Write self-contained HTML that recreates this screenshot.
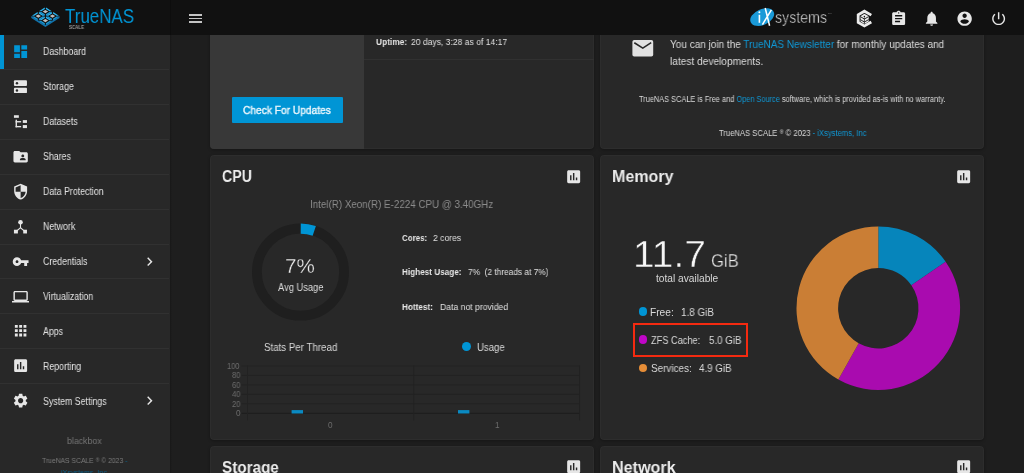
<!DOCTYPE html>
<html><head><meta charset="utf-8"><style>
html,body{margin:0;padding:0;}
body{width:1024px;height:473px;overflow:hidden;position:relative;background:#1e1e1e;font-family:"Liberation Sans",sans-serif;}
.a{position:absolute;}
.t{position:absolute;white-space:pre;line-height:1;transform-origin:0 0;will-change:transform;font-family:"Liberation Sans",sans-serif;}
</style></head><body>
<div style="position:absolute;background:#282828;border-radius:4px;box-shadow:inset 0 0 0 1px rgba(255,255,255,.025),0 1px 3px rgba(0,0,0,.3);left:210px;top:-20px;width:384px;height:169px;overflow:hidden;"><div class="a" style="left:0;top:0;width:154px;height:169px;background:#383838;"></div><div class="a" style="left:154px;top:79.0px;width:230px;height:1px;background:#313131;"></div></div>
<div class="a" style="left:232px;top:97.3px;width:111px;height:25.8px;background:#0095d5;border-radius:1px;"></div>
<div style="position:absolute;background:#282828;border-radius:4px;box-shadow:inset 0 0 0 1px rgba(255,255,255,.025),0 1px 3px rgba(0,0,0,.3);left:600px;top:-20px;width:384px;height:169px;"></div>
<svg class="a" style="left:630px;top:37px" width="26" height="22" viewBox="630 37 26 22"><rect x="632.4" y="40.0" width="20.8" height="16.6" rx="1.8" fill="#e1e1e1"/><path d="M634.3,42.7 L642.8,48.1 L651.2,42.7" stroke="#282828" stroke-width="1.6" fill="none"/></svg>
<div style="position:absolute;background:#282828;border-radius:4px;box-shadow:inset 0 0 0 1px rgba(255,255,255,.025),0 1px 3px rgba(0,0,0,.3);left:210px;top:155px;width:384px;height:285px;"></div>
<div style="position:absolute;background:#282828;border-radius:4px;box-shadow:inset 0 0 0 1px rgba(255,255,255,.025),0 1px 3px rgba(0,0,0,.3);left:600px;top:155px;width:384px;height:285px;"></div>
<div style="position:absolute;background:#282828;border-radius:4px;box-shadow:inset 0 0 0 1px rgba(255,255,255,.025),0 1px 3px rgba(0,0,0,.3);left:210px;top:446px;width:384px;height:60px;"></div>
<div style="position:absolute;background:#282828;border-radius:4px;box-shadow:inset 0 0 0 1px rgba(255,255,255,.025),0 1px 3px rgba(0,0,0,.3);left:600px;top:446px;width:384px;height:60px;"></div>
<svg class="a" style="left:564.83px;top:167.63px" width="17.33" height="17.33" viewBox="0 0 24 24"><path fill="#e6e6e6" d="M19 3H5c-1.1 0-2 .9-2 2v14c0 1.1.9 2 2 2h14c1.1 0 2-.9 2-2V5c0-1.1-.9-2-2-2zM9 17H7v-7h2v7zm4 0h-2V7h2v10zm4 0h-2v-4h2v4z"/></svg>
<svg class="a" style="left:954.83px;top:167.63px" width="17.33" height="17.33" viewBox="0 0 24 24"><path fill="#e6e6e6" d="M19 3H5c-1.1 0-2 .9-2 2v14c0 1.1.9 2 2 2h14c1.1 0 2-.9 2-2V5c0-1.1-.9-2-2-2zM9 17H7v-7h2v7zm4 0h-2V7h2v10zm4 0h-2v-4h2v4z"/></svg>
<svg class="a" style="left:564.83px;top:457.63px" width="17.33" height="17.33" viewBox="0 0 24 24"><path fill="#e6e6e6" d="M19 3H5c-1.1 0-2 .9-2 2v14c0 1.1.9 2 2 2h14c1.1 0 2-.9 2-2V5c0-1.1-.9-2-2-2zM9 17H7v-7h2v7zm4 0h-2V7h2v10zm4 0h-2v-4h2v4z"/></svg>
<svg class="a" style="left:954.83px;top:457.63px" width="17.33" height="17.33" viewBox="0 0 24 24"><path fill="#e6e6e6" d="M19 3H5c-1.1 0-2 .9-2 2v14c0 1.1.9 2 2 2h14c1.1 0 2-.9 2-2V5c0-1.1-.9-2-2-2zM9 17H7v-7h2v7zm4 0h-2V7h2v10zm4 0h-2v-4h2v4z"/></svg>
<svg class="a" style="left:0;top:0" width="1024" height="473" viewBox="0 0 1024 473"><circle cx="300.5" cy="272.1" r="43.6" stroke="#1f1f1f" stroke-width="9.8" fill="none"/><path d="M300.75,223.60 A48.5,48.5 0 0 1 315.89,226.11 L312.65,235.78 A38.3,38.3 0 0 0 300.70,233.80Z" fill="#0095d5"/></svg>
<div class="a" style="left:462px;top:342.2px;width:9px;height:9px;border-radius:50%;background:#0095d5;"></div>
<svg class="a" style="left:0;top:0" width="1024" height="473" viewBox="0 0 1024 473"><path d="M241.5,366.00 H580" stroke="#222222" stroke-width="1"/><path d="M241.5,375.44 H580" stroke="#222222" stroke-width="1"/><path d="M241.5,384.88 H580" stroke="#222222" stroke-width="1"/><path d="M241.5,394.32 H580" stroke="#222222" stroke-width="1"/><path d="M241.5,403.76 H580" stroke="#222222" stroke-width="1"/><path d="M241.5,413.3 H580" stroke="#1c1c1c" stroke-width="1"/><path d="M247.5,365.5 V420.5 M413.8,365.5 V420.5 M579.6,365.5 V420.5" stroke="#222222" stroke-width="1"/><rect x="291.6" y="410.1" width="11.4" height="3.4" fill="#0a8ac2"/><rect x="458.0" y="410.1" width="11.4" height="3.4" fill="#0a8ac2"/></svg>
<svg class="a" style="left:0;top:0" width="1024" height="473" viewBox="0 0 1024 473"><path d="M878.30,226.40 A81.8,81.8 0 0 1 945.62,261.73 L911.38,285.36 A40.2,40.2 0 0 0 878.30,268.00Z" fill="#0685bb"/><path d="M945.62,261.73 A81.8,81.8 0 0 1 838.35,379.58 L858.67,343.28 A40.2,40.2 0 0 0 911.38,285.36Z" fill="#a90baf"/><path d="M838.35,379.58 A81.8,81.8 0 0 1 878.30,226.40 L878.30,268.00 A40.2,40.2 0 0 0 858.67,343.28Z" fill="#ca7e35"/></svg>
<div class="a" style="left:638.9px;top:307.2px;width:8.6px;height:8.6px;border-radius:50%;background:#0095d5;"></div>
<div class="a" style="left:638.9px;top:335.3px;width:8.6px;height:8.6px;border-radius:50%;background:#c006c7;"></div>
<div class="a" style="left:638.9px;top:363.5px;width:8.6px;height:8.6px;border-radius:50%;background:#e68d37;"></div>
<div class="a" style="left:633.1px;top:322.8px;width:110.6px;height:29.9px;border:2.1px solid #f42a10;"></div>
<div class="a" style="left:0;top:35px;width:170px;height:438px;background:#282828;"></div>
<div class="a" style="left:170px;top:35px;width:2px;height:438px;background:linear-gradient(90deg,rgba(0,0,0,.22),rgba(0,0,0,0));"></div>
<div class="a" style="left:0;top:35px;width:3.5px;height:34.4px;background:#0095d5;"></div>
<svg class="a" style="left:11.96px;top:43.06px" width="17.28" height="17.28" viewBox="0 0 24 24"><path d="M3 13h8V3H3v10zm0 8h8v-6H3v6zm10 0h8V11h-8v10zm0-18v6h8V3h-8z" fill="#0095d5"/></svg>
<div class="a" style="left:0;width:169px;height:1px;background:#313131;top:68.92px"></div>
<svg class="a" style="left:11.96px;top:77.98px" width="17.28" height="17.28" viewBox="0 0 24 24"><rect x="2.7" y="3.25" width="18.1" height="7.75" rx="1.3" fill="#e6e6e6"/><rect x="2.7" y="13.7" width="18.1" height="7.3" rx="1.3" fill="#e6e6e6"/><circle cx="6.9" cy="7.2" r="1.7" fill="#282828"/><circle cx="6.9" cy="17.3" r="1.7" fill="#282828"/></svg>
<div class="a" style="left:0;width:169px;height:1px;background:#313131;top:103.84px"></div>
<svg class="a" style="left:11.96px;top:112.90px" width="17.28" height="17.28" viewBox="0 0 24 24"><g fill="#e6e6e6"><rect x="2.7" y="3.1" width="6.8" height="3.6"/><rect x="5" y="9.3" width="1.9" height="10.6"/><rect x="5" y="11.2" width="7.7" height="1.9"/><rect x="5" y="18" width="7.7" height="1.9"/><rect x="15" y="9.9" width="5.8" height="3.9"/><rect x="15" y="16.8" width="5.8" height="4.2"/></g></svg>
<div class="a" style="left:0;width:169px;height:1px;background:#313131;top:138.76px"></div>
<svg class="a" style="left:11.96px;top:147.82px" width="17.28" height="17.28" viewBox="0 0 24 24"><path fill="#e6e6e6" d="M20 6h-8l-2-2H4c-1.1 0-1.99.9-1.99 2L2 18c0 1.1.9 2 2 2h16c1.1 0 2-.9 2-2V8c0-1.1-.9-2-2-2zm-5 3c1.1 0 2 .9 2 2s-.9 2-2 2-2-.9-2-2 .9-2 2-2zm4 8h-8v-1c0-1.33 2.67-2 4-2s4 .67 4 2v1z"/></svg>
<div class="a" style="left:0;width:169px;height:1px;background:#313131;top:173.68px"></div>
<svg class="a" style="left:11.96px;top:182.74px" width="17.28" height="17.28" viewBox="0 0 24 24"><path fill="#e6e6e6" d="M12 1L3 5v6c0 5.55 3.84 10.74 9 12 5.16-1.26 9-6.450 9-12V5l-9-4zm0 10.99h7c-.53 4.12-3.28 7.79-7 8.94V12H5V6.3l7-3.11v8.8z"/></svg>
<div class="a" style="left:0;width:169px;height:1px;background:#313131;top:208.60px"></div>
<svg class="a" style="left:11.96px;top:217.66px" width="17.28" height="17.28" viewBox="0 0 24 24"><g fill="#e6e6e6"><circle cx="11.8" cy="6" r="3.2"/><rect x="2.7" y="16.3" width="5.5" height="5.2"/><rect x="15.6" y="16.3" width="5.2" height="5.2"/></g><path d="M11.8 6V13.6L5.5 18.9M11.8 13.6L18.2 18.9" stroke="#e6e6e6" stroke-width="1.5" fill="none"/></svg>
<div class="a" style="left:0;width:169px;height:1px;background:#313131;top:243.52px"></div>
<svg class="a" style="left:11.96px;top:252.58px" width="17.28" height="17.28" viewBox="0 0 24 24"><path fill="#e6e6e6" d="M12.65 10C11.83 7.67 9.61 6 7 6c-3.31 0-6 2.690-6 6s2.69 6 6 6c2.61 0 4.83-1.67 5.65-4H17v4h4v-4h2v-4H12.65zM7 14c-1.1 0-2-.9-2-2s.9-2 2-2 2 .9 2 2-.9 2-2 2z"/></svg>
<div class="a" style="left:0;width:169px;height:1px;background:#313131;top:278.44px"></div>
<svg class="a" style="left:11.96px;top:287.50px" width="17.28" height="17.28" viewBox="0 0 24 24"><path fill="#e6e6e6" d="M20 18c1.1 0 1.99-.9 1.99-2L22 6c0-1.1-.9-2-2-2H4c-1.1 0-2 .9-2 2v10c0 1.1.9 2 2 2H0v2h24v-2h-4zM4 6h16v10H4V6z"/></svg>
<div class="a" style="left:0;width:169px;height:1px;background:#313131;top:313.36px"></div>
<svg class="a" style="left:11.96px;top:322.42px" width="17.28" height="17.28" viewBox="0 0 24 24"><path fill="#e6e6e6" d="M4 8h4V4H4v4zm6 12h4v-4h-4v4zm-6 0h4v-4H4v4zm0-6h4v-4H4v4zm6 0h4v-4h-4v4zm6-10v4h4V4h-4zm-6 4h4V4h-4v4zm6 6h4v-4h-4v4zm0 6h4v-4h-4v4z"/></svg>
<div class="a" style="left:0;width:169px;height:1px;background:#313131;top:348.28px"></div>
<svg class="a" style="left:11.96px;top:357.34px" width="17.28" height="17.28" viewBox="0 0 24 24"><path fill="#e6e6e6" d="M19 3H5c-1.1 0-2 .9-2 2v14c0 1.1.9 2 2 2h14c1.1 0 2-.9 2-2V5c0-1.1-.9-2-2-2zM9 17H7v-7h2v7zm4 0h-2V7h2v10zm4 0h-2v-4h2v4z"/></svg>
<div class="a" style="left:0;width:169px;height:1px;background:#313131;top:383.20px"></div>
<svg class="a" style="left:11.96px;top:392.26px" width="17.28" height="17.28" viewBox="0 0 24 24"><path fill="#e6e6e6" d="M19.14 12.94c.04-.3.06-.61.06-.94 0-.32-.02-.64-.07-.94l2.03-1.58c.18-.14.23-.41.12-.61l-1.92-3.32c-.12-.22-.37-.29-.59-.22l-2.39.96c-.5-.38-1.03-.7-1.62-.94l-.36-2.54c-.04-.24-.24-.41-.48-.41h-3.840c-.24 0-.43.17-.47.41l-.36 2.54c-.59.24-1.13.57-1.62.94l-2.39-.96c-.22-.08-.47 0-.59.22L2.74 8.87c-.12.21-.08.47.12.61l2.03 1.58c-.05.3-.09.63-.09.94s.02.64.07.94l-2.03 1.58c-.18.14-.23.41-.12.61l1.92 3.32c.12.22.37.29.59.22l2.39-.96c.5.38 1.03.7 1.62.94l.36 2.54c.05.24.24.41.48.41h3.84c.24 0 .44-.17.47-.41l.36-2.54c.59-.24 1.13-.56 1.62-.94l2.39.96c.22.08.47 0 .59-.22l1.92-3.32c.12-.22.07-.47-.12-.61l-2.01-1.58zM12 15.6c-1.98 0-3.6-1.62-3.6-3.6s1.62-3.6 3.6-3.6 3.6 1.62 3.6 3.6-1.62 3.6-3.6 3.6z"/></svg>
<svg class="a" style="left:140.56px;top:252.78px" width="17.28" height="17.28" viewBox="0 0 24 24"><path fill="#e6e6e6" d="M10 6L8.59 7.41 13.17 12l-4.58 4.59L10 18l6-6z"/></svg>
<svg class="a" style="left:140.56px;top:392.46px" width="17.28" height="17.28" viewBox="0 0 24 24"><path fill="#e6e6e6" d="M10 6L8.59 7.41 13.17 12l-4.58 4.59L10 18l6-6z"/></svg>
<div class="a" style="left:0;top:0;width:1024px;height:35px;background:#111111;"></div>
<div class="a" style="left:170px;top:0;width:1px;height:35px;background:#0d0d0d;"></div>
<div class="a" style="left:189px;top:14.2px;width:13.2px;height:1.7px;background:#c4c4c4;"></div>
<div class="a" style="left:189px;top:17.7px;width:13.2px;height:1.7px;background:#c4c4c4;"></div>
<div class="a" style="left:189px;top:21.2px;width:13.2px;height:1.7px;background:#c4c4c4;"></div>
<svg class="a" style="left:889.76px;top:9.98px" width="17.28" height="17.28" viewBox="0 0 24 24"><path fill="#e6e6e6" d="M19 3h-4.18C14.4 1.84 13.3 1 12 1c-1.3 0-2.4.84-2.82 2H5c-1.1 0-2 .9-2 2v14c0 1.1.9 2 2 2h14c1.1 0 2-.9 2-2V5c0-1.1-.9-2-2-2zm-7 0c.55 0 1 .45 1 1s-.45 1-1 1-1-.45-1-1 .45-1 1-1zm2 14H7v-2h7v2zm3-4H7v-2h10v2zm0-4H7V7h10v2z"/></svg>
<svg class="a" style="left:922.86px;top:9.73px" width="17.28" height="17.28" viewBox="0 0 24 24"><path fill="#e6e6e6" d="M12 22c1.1 0 2-.9 2-2h-4c0 1.1.89 2 2 2zm6-6v-5c0-3.07-1.64-5.64-4.5-6.32V4c0-.83-.67-1.5-1.5-1.5s-1.5.67-1.5 1.5v.68C7.63 5.36 6 7.92 6 11v5l-2 2v1h16v-1l-2-2z"/></svg>
<svg class="a" style="left:956.46px;top:9.91px" width="17.28" height="17.28" viewBox="0 0 24 24"><path fill="#e6e6e6" d="M12 2C6.48 2 2 6.48 2 12s4.48 10 10 10 10-4.48 10-10S17.52 2 12 2zm0 3c1.66 0 3 1.34 3 3s-1.34 3-3 3-3-1.34-3-3 1.34-3 3-3zm0 14.2c-2.5 0-4.71-1.28-6-3.22.03-1.99 4-3.08 6-3.08 1.99 0 5.970 1.09 6 3.08-1.29 1.94-3.5 3.22-6 3.22z"/></svg>
<svg class="a" style="left:989.86px;top:9.96px" width="17.28" height="17.28" viewBox="0 0 24 24"><path fill="#e6e6e6" d="M13 3h-2v10h2V3zm4.83 2.17l-1.42 1.42C17.99 7.86 19 9.81 19 12c0 3.87-3.13 7-7 7s-7-3.13-7-7c0-2.19 1.01-4.14 2.58-5.42L6.17 5.17C4.23 6.82 3 9.26 3 12c0 4.97 4.030 9 9 9s9-4.03 9-9c0-2.74-1.23-5.18-3.17-6.83z"/></svg>
<svg class="a" style="left:852px;top:6px" width="26" height="24" viewBox="852 6 26 24">
<path d="M871.3,15.1 L864.4,11.2 L858.2,14.8 L858.2,22.4 L864.4,25.9 L871.3,22.0" stroke="#ececec" stroke-width="2.8" fill="none" stroke-linejoin="miter"/>
<path d="M864.4,13.7 L868.7,16.2 L868.7,21.6 L864.4,24.1 L860.5,21.6 L860.5,16.2Z" fill="#ececec"/>
<path d="M860.3,16.6 L864.4,19.0 L868.7,16.6 M860.3,19.6 L864.4,22.0 L868.7,19.6" stroke="#111" stroke-width="0.9" fill="none"/>
<path d="M864.4,17.5 V24.3" stroke="#111" stroke-width="0.7"/>
<circle cx="864.4" cy="16.4" r="0.75" fill="#111"/>
</svg>
<svg class="a" style="left:746px;top:4px" width="34" height="26" viewBox="746 4 34 26">
<ellipse cx="762.2" cy="17.1" rx="12.6" ry="7.9" transform="rotate(-24 762.2 17.1)" fill="#1a9ad8"/>
<path d="M759.4,14.8 V22.8" stroke="#fff" stroke-width="1.6"/>
<circle cx="759.4" cy="12.2" r="1.0" fill="#fff"/>
<path d="M765.2,8.0 L769.6,25.8 M771.4,9.8 L762.4,24.6" stroke="#fff" stroke-width="1.5"/>
</svg>
<div class="t" style="left:828px;top:13.2px;font-size:2.4px;color:#888">TM</div>
<svg class="a" style="left:28px;top:4px" width="36" height="26" viewBox="28 4 36 26"><path d="M31.3,16.1 L45.4,25.1 L59.5,16.1 L59.5,18.0 L45.4,27.0 L31.3,18.0Z" fill="#1170a8"/><path d="M46.11,7.55 L51.79,11.15 L49.49,11.31 L45.85,9.01Z" fill="#2ab6f2"/><path d="M51.79,12.05 L46.11,15.65 L45.85,14.19 L49.49,11.89Z" fill="#1a9ad9"/><path d="M44.69,15.65 L39.01,12.05 L41.31,11.89 L44.95,14.19Z" fill="#1a9ad9"/><path d="M39.01,11.15 L44.69,7.55 L44.95,9.01 L41.31,11.31Z" fill="#2ab6f2"/><path d="M45.4,9.9 L48.1,11.6 L45.4,13.299999999999999 L42.699999999999996,11.6Z" fill="#bfbfbf"/><path d="M39.01,12.05 L44.69,15.65 L42.39,15.81 L38.75,13.51Z" fill="#2ab6f2"/><path d="M44.69,16.55 L39.01,20.15 L38.75,18.69 L42.39,16.39Z" fill="#1a9ad9"/><path d="M37.59,20.15 L31.91,16.55 L34.21,16.39 L37.85,18.69Z" fill="#1a9ad9"/><path d="M31.91,15.65 L37.59,12.05 L37.85,13.51 L34.21,15.81Z" fill="#2ab6f2"/><path d="M38.3,14.400000000000002 L41.0,16.1 L38.3,17.8 L35.599999999999994,16.1Z" fill="#bfbfbf"/><path d="M53.21,12.05 L58.89,15.65 L56.59,15.81 L52.95,13.51Z" fill="#2ab6f2"/><path d="M58.89,16.55 L53.21,20.15 L52.95,18.69 L56.59,16.39Z" fill="#1a9ad9"/><path d="M51.79,20.15 L46.11,16.55 L48.41,16.39 L52.05,18.69Z" fill="#1a9ad9"/><path d="M46.11,15.65 L51.79,12.05 L52.05,13.51 L48.41,15.81Z" fill="#2ab6f2"/><path d="M52.5,14.400000000000002 L55.2,16.1 L52.5,17.8 L49.8,16.1Z" fill="#bfbfbf"/><path d="M46.11,16.55 L51.79,20.15 L49.49,20.31 L45.85,18.01Z" fill="#2ab6f2"/><path d="M51.79,21.05 L46.11,24.65 L45.85,23.19 L49.49,20.89Z" fill="#1a9ad9"/><path d="M44.69,24.65 L39.01,21.05 L41.31,20.89 L44.95,23.19Z" fill="#1a9ad9"/><path d="M39.01,20.15 L44.69,16.55 L44.95,18.01 L41.31,20.31Z" fill="#2ab6f2"/><path d="M45.4,18.900000000000002 L48.1,20.6 L45.4,22.3 L42.699999999999996,20.6Z" fill="#bfbfbf"/></svg>
<div class="t" style="left:42.52px;top:47.30px;font-size:10.0px;font-weight:400;color:#e2e2e2;transform:scaleX(0.8800);">Dashboard</div>
<div class="t" style="left:43.40px;top:82.22px;font-size:10.0px;font-weight:400;color:#e2e2e2;transform:scaleX(0.8800);">Storage</div>
<div class="t" style="left:42.52px;top:117.14px;font-size:10.0px;font-weight:400;color:#e2e2e2;transform:scaleX(0.8800);">Datasets</div>
<div class="t" style="left:43.40px;top:152.06px;font-size:10.0px;font-weight:400;color:#e2e2e2;transform:scaleX(0.8800);">Shares</div>
<div class="t" style="left:42.52px;top:186.98px;font-size:10.0px;font-weight:400;color:#e2e2e2;transform:scaleX(0.8800);">Data Protection</div>
<div class="t" style="left:42.52px;top:221.90px;font-size:10.0px;font-weight:400;color:#e2e2e2;transform:scaleX(0.8800);">Network</div>
<div class="t" style="left:43.40px;top:256.82px;font-size:10.0px;font-weight:400;color:#e2e2e2;transform:scaleX(0.8800);">Credentials</div>
<div class="t" style="left:43.40px;top:291.74px;font-size:10.0px;font-weight:400;color:#e2e2e2;transform:scaleX(0.8800);">Virtualization</div>
<div class="t" style="left:43.40px;top:326.66px;font-size:10.0px;font-weight:400;color:#e2e2e2;transform:scaleX(0.8800);">Apps</div>
<div class="t" style="left:42.52px;top:361.58px;font-size:10.0px;font-weight:400;color:#e2e2e2;transform:scaleX(0.8800);">Reporting</div>
<div class="t" style="left:43.40px;top:396.50px;font-size:10.0px;font-weight:400;color:#e2e2e2;transform:scaleX(0.8800);">System Settings</div>
<div class="t" style="left:67.10px;top:436.60px;font-size:9.2px;font-weight:400;color:#767676;transform:scaleX(0.9556);">blackbox</div>
<div class="t" style="left:41.80px;top:456.80px;font-size:7.3px;font-weight:400;color:#7c7c7c;transform:scaleX(0.9283);">TrueNAS SCALE <span style="font-size:5.5px;vertical-align:1.5px">®</span> © 2023 <span style="color:#0a6a96">-</span></div>
<div class="t" style="left:61.00px;top:469.30px;font-size:7.3px;font-weight:400;color:#8a8a8a;transform:scaleX(0.9745);"><span style="color:#0a5f88">iXsystems, Inc</span></div>
<div class="t" style="left:65.40px;top:5.90px;font-size:20.0px;font-weight:400;color:#0095d5;transform:scaleX(0.8469);">TrueNAS</div>
<div class="t" style="left:69.00px;top:25.70px;font-size:4.9px;font-weight:700;color:#9a9a9a;transform:scaleX(0.9125);">SCALE</div>
<div class="t" style="left:775.30px;top:9.00px;font-size:16.2px;font-weight:400;color:#e6e6e6;transform:scaleX(0.8763);-webkit-text-stroke:0.45px #111111;">systems</div>
<div class="t" style="left:375.60px;top:36.80px;font-size:9.9px;font-weight:700;color:#e6e6e6;transform:scaleX(0.8444);">Uptime:</div>
<div class="t" style="left:410.80px;top:36.80px;font-size:9.9px;font-weight:400;color:#e0e0e0;transform:scaleX(0.8667);">20 days, 3:28 as of 14:17</div>
<div class="t" style="left:243.20px;top:105.00px;font-size:10.8px;font-weight:400;color:#eaf6fc;transform:scaleX(0.9452);-webkit-text-stroke:0.4px #eaf6fc;">Check For Updates</div>
<div class="t" style="left:670.30px;top:39.00px;font-size:10.5px;font-weight:400;color:#dcdcdc;transform:scaleX(0.9521);">You can join the <span style="color:#0f98d6">TrueNAS Newsletter</span> for monthly updates and</div>
<div class="t" style="left:670.30px;top:55.70px;font-size:10.5px;font-weight:400;color:#dcdcdc;transform:scaleX(0.9667);">latest developments.</div>
<div class="t" style="left:639.00px;top:95.00px;font-size:8.3px;font-weight:400;color:#dcdcdc;transform:scaleX(0.8895);">TrueNAS SCALE is Free and <span style="color:#0f98d6">Open Source</span> software, which is provided as-is with no warranty.</div>
<div class="t" style="left:718.60px;top:128.80px;font-size:8.3px;font-weight:400;color:#dcdcdc;transform:scaleX(0.9213);">TrueNAS SCALE <span style="font-size:6px;vertical-align:2px">®</span> © 2023 <span style="color:#0f98d6">- iXsystems, Inc</span></div>
<div class="t" style="left:222.30px;top:168.00px;font-size:17.2px;font-weight:700;color:#ececec;transform:scaleX(0.8222);">CPU</div>
<div class="t" style="left:310.09px;top:199.20px;font-size:10.8px;font-weight:400;color:#8c8c8c;transform:scaleX(0.9075);">Intel(R) Xeon(R) E-2224 CPU @ 3.40GHz</div>
<div class="t" style="left:285.35px;top:256.90px;font-size:19.6px;font-weight:400;color:#ececec;transform:scaleX(1.0519);-webkit-text-stroke:0.3px #282828;">7%</div>
<div class="t" style="left:277.60px;top:281.60px;font-size:11.0px;font-weight:400;color:#dadada;transform:scaleX(0.8481);">Avg Usage</div>
<div class="t" style="left:402.40px;top:234.00px;font-size:9.3px;font-weight:700;color:#e6e6e6;transform:scaleX(0.8552);">Cores:</div>
<div class="t" style="left:433.30px;top:234.00px;font-size:9.3px;font-weight:400;color:#e0e0e0;transform:scaleX(0.9233);">2 cores</div>
<div class="t" style="left:402.40px;top:268.40px;font-size:9.3px;font-weight:700;color:#e6e6e6;transform:scaleX(0.8791);">Highest Usage:</div>
<div class="t" style="left:468.00px;top:268.40px;font-size:9.3px;font-weight:400;color:#e0e0e0;transform:scaleX(0.8944);">7%  (2 threads at 7%)</div>
<div class="t" style="left:402.40px;top:302.80px;font-size:9.3px;font-weight:700;color:#e6e6e6;transform:scaleX(0.8800);">Hottest:</div>
<div class="t" style="left:439.80px;top:302.80px;font-size:9.3px;font-weight:400;color:#e0e0e0;transform:scaleX(0.9274);">Data not provided</div>
<div class="t" style="left:263.50px;top:343.00px;font-size:10.2px;font-weight:400;color:#dadada;transform:scaleX(0.9545);">Stats Per Thread</div>
<div class="t" style="left:476.70px;top:343.00px;font-size:10.2px;font-weight:400;color:#dadada;transform:scaleX(0.9414);">Usage</div>
<div class="t" style="left:227.32px;top:363.00px;font-size:8.2px;font-weight:400;color:#6c6c6c;transform:scaleX(0.9200);">100</div>
<div class="t" style="left:231.92px;top:372.45px;font-size:8.2px;font-weight:400;color:#6c6c6c;transform:scaleX(0.9200);">80</div>
<div class="t" style="left:231.92px;top:381.90px;font-size:8.2px;font-weight:400;color:#6c6c6c;transform:scaleX(0.9200);">60</div>
<div class="t" style="left:231.92px;top:391.35px;font-size:8.2px;font-weight:400;color:#6c6c6c;transform:scaleX(0.9200);">40</div>
<div class="t" style="left:231.92px;top:400.80px;font-size:8.2px;font-weight:400;color:#6c6c6c;transform:scaleX(0.9200);">20</div>
<div class="t" style="left:235.60px;top:410.25px;font-size:8.2px;font-weight:400;color:#6c6c6c;transform:scaleX(0.9200);">0</div>
<div class="t" style="left:328.30px;top:422.00px;font-size:8.2px;font-weight:400;color:#6c6c6c;transform:scaleX(0.9200);">0</div>
<div class="t" style="left:495.16px;top:422.00px;font-size:8.2px;font-weight:400;color:#6c6c6c;transform:scaleX(0.9200);">1</div>
<div class="t" style="left:611.74px;top:168.70px;font-size:16.7px;font-weight:700;color:#ececec;transform:scaleX(0.9603);">Memory</div>
<div class="t" style="left:633.45px;top:235.50px;font-size:37.2px;font-weight:400;color:#f6f6f6;transform:scaleX(1.0492);-webkit-text-stroke:0.5px #282828;">11.7</div>
<div class="t" style="left:710.56px;top:252.50px;font-size:17.7px;font-weight:400;color:#ececec;transform:scaleX(0.9393);-webkit-text-stroke:0.3px #282828;">GiB</div>
<div class="t" style="left:655.75px;top:274.40px;font-size:10.0px;font-weight:400;color:#d8d8d8;transform:scaleX(1.0180);">total available</div>
<div class="t" style="left:649.70px;top:308.00px;font-size:10.2px;font-weight:400;color:#dadada;">Free:</div>
<div class="t" style="left:680.63px;top:308.00px;font-size:10.2px;font-weight:400;color:#dadada;transform:scaleX(0.9697);">1.8 GiB</div>
<div class="t" style="left:650.70px;top:335.90px;font-size:10.2px;font-weight:400;color:#dadada;transform:scaleX(0.9056);">ZFS Cache:</div>
<div class="t" style="left:708.60px;top:335.90px;font-size:10.2px;font-weight:400;color:#dadada;transform:scaleX(0.9529);">5.0 GiB</div>
<div class="t" style="left:650.70px;top:364.00px;font-size:10.2px;font-weight:400;color:#dadada;transform:scaleX(0.9732);">Services:</div>
<div class="t" style="left:699.00px;top:364.00px;font-size:10.2px;font-weight:400;color:#dadada;transform:scaleX(0.9559);">4.9 GiB</div>
<div class="t" style="left:222.30px;top:460.00px;font-size:16.7px;font-weight:700;color:#ececec;transform:scaleX(0.9145);">Storage</div>
<div class="t" style="left:611.73px;top:460.00px;font-size:16.7px;font-weight:700;color:#ececec;transform:scaleX(0.9677);">Network</div>
</body></html>
